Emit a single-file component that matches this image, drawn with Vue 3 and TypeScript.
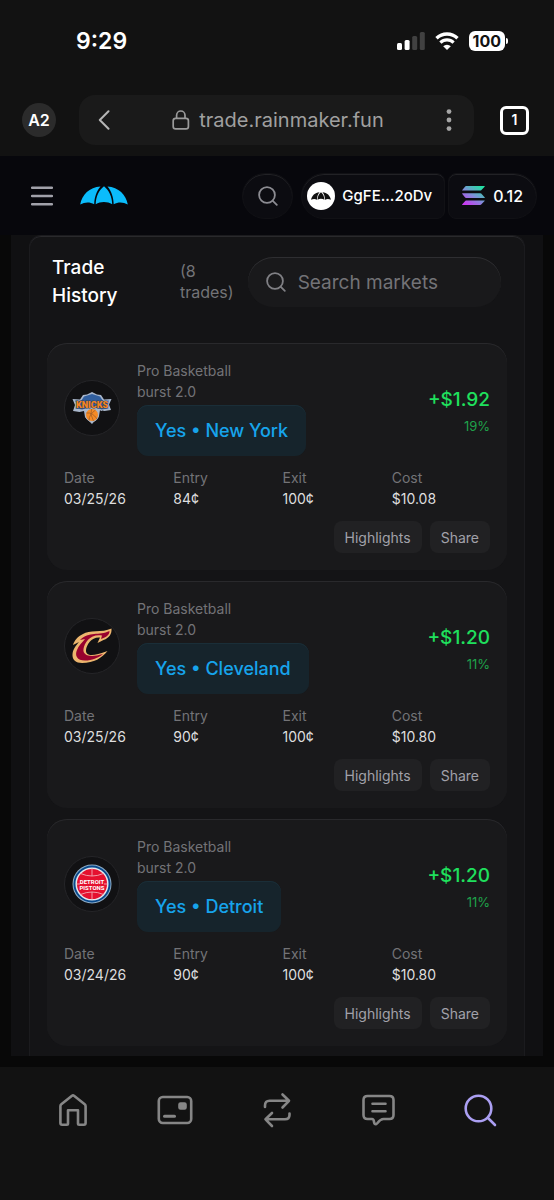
<script setup lang="ts">
import { ref } from 'vue'

interface Trade {
  id: number
  team: 'knicks' | 'cavs' | 'pistons'
  name: string
  date: string
  entry: string
  exit: string
  cost: string
  profit: string
  percent: string
}

const query = ref('')

const trades: Trade[] = [
  { id: 1, team: 'knicks', name: 'New York', date: '03/25/26', entry: '84¢', exit: '100¢', cost: '$10.08', profit: '+$1.92', percent: '19%' },
  { id: 2, team: 'cavs', name: 'Cleveland', date: '03/25/26', entry: '90¢', exit: '100¢', cost: '$10.80', profit: '+$1.20', percent: '11%' },
  { id: 3, team: 'pistons', name: 'Detroit', date: '03/24/26', entry: '90¢', exit: '100¢', cost: '$10.80', profit: '+$1.20', percent: '11%' },
]
</script>

<template>
  <div class="screen">
    <div class="status">
      <span class="clock">9:29</span>
      <div class="indicators">
        <svg width="28" height="18" viewBox="0 0 28 18" aria-hidden="true">
          <rect x="0" y="11" width="5" height="7" rx="1.5" fill="#fff" />
          <rect x="7.6" y="8" width="5" height="10" rx="1.5" fill="#fff" />
          <rect x="15.2" y="4" width="5" height="14" rx="1.5" fill="#414141" />
          <rect x="22.8" y="0" width="5" height="18" rx="1.5" fill="#414141" />
        </svg>
        <svg width="24" height="18" viewBox="0 0 24 18" aria-hidden="true">
          <path d="M1.5 6.2a15.2 15.2 0 0 1 21 0" fill="none" stroke="#fff" stroke-width="3.4" />
          <path d="M5.4 10.6a9.5 9.5 0 0 1 13.2 0" fill="none" stroke="#fff" stroke-width="3.2" />
          <path d="M8.2 14.2a5.4 5.4 0 0 1 7.6 0L12 18z" fill="#fff" />
        </svg>
        <div class="battery"><span class="level">100</span><span class="cap"></span></div>
      </div>
    </div>

    <div class="browser">
      <button class="profile" type="button">A2</button>
      <div class="address">
        <button class="plain" type="button" aria-label="Back">
          <svg width="12" height="20" viewBox="0 0 12 20" aria-hidden="true">
            <path d="M10.5 1.2 1.8 10l8.7 8.8" fill="none" stroke="#b5b5b5" stroke-width="2" stroke-linecap="round" stroke-linejoin="round" />
          </svg>
        </button>
        <button class="plain url" type="button">
          <svg width="18" height="20" viewBox="0 0 18 20" aria-hidden="true">
            <g fill="none" stroke="#9a9a9a" stroke-width="1.7">
              <rect x="1.2" y="8.4" width="15.2" height="10.4" rx="2.4" />
              <path d="M4.600 8.400V5.200a4.200 4.200 0 0 1 8.400 0v3.200" />
            </g>
          </svg>
          <span>trade.rainmaker.fun</span>
        </button>
        <button class="plain" type="button" aria-label="Menu">
          <svg width="6" height="22" viewBox="0 0 6 22" aria-hidden="true" fill="#a5a5a5">
            <circle cx="3" cy="2.6" r="2.4" /><circle cx="3" cy="11" r="2.4" /><circle cx="3" cy="19.6" r="2.4" />
          </svg>
        </button>
      </div>
      <button class="tabs" type="button" aria-label="Open tabs, 1">1</button>
    </div>

    <header class="site">
      <button class="plain" type="button" aria-label="Open menu">
        <svg width="22" height="20" viewBox="0 0 22 20" aria-hidden="true">
          <path d="M1 1.800h20M1 10h20M1 18.200h20" stroke="#a1a1aa" stroke-width="2.400" stroke-linecap="round" />
        </svg>
      </button>
      <a class="brand" href="#" aria-label="Rainmaker">
        <svg width="48" height="19" viewBox="0 0 48 19" aria-hidden="true" fill="#0bbcfb">
          <path d="M20.500.600C9.500 1.300 1.800 8.800.2 18.600c4.700-2.700 9.500-2.800 14-.3C14.500 11.300 16.500 5 20.500.6z" />
          <path d="M24 .3C18.600 4.500 16 10.500 15.700 18.200c4.900-2.900 11.500-2.900 16.500 0C31.900 10.500 29.200 4.500 24 .3z" />
          <path d="M27.500.600c4 4.400 5.900 10.700 6.200 17.700 4.500-2.500 9.500-2.400 14.100.3C46.200 8.800 38.500 1.300 27.500.6z" />
        </svg>
      </a>
      <button class="chip round" type="button" aria-label="Search">
        <svg width="20" height="20" viewBox="0 0 20 20" aria-hidden="true">
          <g fill="none" stroke="#8c8c92" stroke-width="1.800" stroke-linecap="round"><circle cx="9" cy="9" r="7.900" /><path d="m14.800 14.800 4 4" /></g>
        </svg>
      </button>
      <div class="account">
        <button class="chip wallet" type="button">
          <span class="avatar">
            <svg width="20" height="8" viewBox="0 0 48 19" aria-hidden="true" fill="#111">
              <path d="M20.500.600C9.500 1.300 1.800 8.800.2 18.600c4.700-2.700 9.500-2.800 14-.3C14.500 11.300 16.500 5 20.500.6z" />
              <path d="M24 .3C18.600 4.500 16 10.500 15.700 18.200c4.900-2.900 11.500-2.900 16.500 0C31.900 10.500 29.200 4.500 24 .3z" />
              <path d="M27.500.600c4 4.400 5.900 10.700 6.200 17.700 4.500-2.500 9.500-2.400 14.100.3C46.200 8.800 38.500 1.300 27.500.6z" />
            </svg>
          </span>
          <span>GgFE...2oDv</span>
        </button>
        <button class="chip balance" type="button">
          <svg width="23" height="19" viewBox="0 0 23 19" aria-hidden="true">
            <defs>
              <linearGradient id="solana" gradientUnits="userSpaceOnUse" x1="18" y1="0" x2="5" y2="19">
                <stop offset="0" stop-color="#24dfa4" /><stop offset="0.5" stop-color="#7d91d8" /><stop offset="1" stop-color="#c83af0" />
              </linearGradient>
            </defs>
            <g fill="url(#solana)">
              <path d="M4 0h18.200q1 0 .4.700L19.200 4.200q-.4.400-1 .4H.7q-1 0-.4-.7L3.200.5Q3.500 0 4 0z" />
              <path d="M.7 7.200h17.500q.6 0 1 .4l3.400 3.600q.6.700-.4.700H4q-.5 0-.9-.4L.3 8Q-.3 7.200.7 7.200z" />
              <path d="M4 14.400h18.200q1 0 .4.700l-3.400 3.500q-.4.400-1 .4H.7q-1 0-.4-.7l2.900-3.400q.3-.5.800-.5z" />
            </g>
          </svg>
          <span>0.12</span>
        </button>
      </div>
    </header>

    <main class="page">
      <section class="panel">
        <div class="panel-head">
          <h1>Trade History</h1>
          <span class="count">(8 trades)</span>
          <label class="search">
            <svg width="20" height="20" viewBox="0 0 20 20" aria-hidden="true">
              <g fill="none" stroke="#808085" stroke-width="1.800" stroke-linecap="round"><circle cx="9" cy="9" r="7.900" /><path d="m14.800 14.800 4 4" /></g>
            </svg>
            <input v-model="query" type="text" placeholder="Search markets" aria-label="Search markets" />
          </label>
        </div>

        <article v-for="trade in trades" :key="trade.id" class="card">
          <div class="top">
            <div class="logo">
              <svg v-if="trade.team === 'knicks'" width="40" height="34" viewBox="0 0 40 34" aria-hidden="true">
                <path d="M.5 8 8 8.500 11 4l4-.5 5-2.500 5 2.500 4 .5 3 4.500 7.500-.5-2.500 5.500 2 5.500-6.500 1-4.500-1-1 6L20 33l-7-7-1-6-4.500 1L1 20l2-6z" fill="#a9b7cc" />
                <path d="m3 9.500 6 .5 3-4.500L20 3l8 2.500L31 10l6-.5-2 4 1.500 4-7 1L20 16l-9.500 2.500-7-1 1.500-4z" fill="#315f9f" />
                <path d="M10 19.500q10-5 20 0" fill="none" stroke="#a9b7cc" stroke-width="1" />
                <circle cx="20" cy="24" r="6.500" fill="#f58a25" stroke="#a9b7cc" />
                <path d="M14.500 22q6-1 10.500 6M17 29.500q0-6 6.500-10.500M19.500 18q-2 5 2 12" fill="none" stroke="#a35f26" stroke-width=".8" />
                <text class="arch" x="20" y="16.500">KNICKS</text>
              </svg>
              <svg v-else-if="trade.team === 'cavs'" width="42" height="38" viewBox="0 0 42 38" aria-hidden="true">
                <path d="M40.500 1.500c.5 5-2 9.500-8 11.500l-6 3 2.500-5.500c-8-1-13.500 7-14 12.500-.3 6 6 7 21.500 1C31 31 23 36 11 36c-6 0-10-3-9.500-9C2 22 5 18.500 8 15l-6 3c1-4 5-9 10-11C18 2.500 31 6 40.500 1.500z" fill="#ecb56e" />
                <path d="M38.500 4c0 4-3 6-8.500 8l1-3.500C20 6.500 13.500 15 12.500 22c-1 6.500 6.500 9 19.500 5-5 4-11 6.500-18 6.500-8 0-10.500-5-8-10.500 1.500-4 5-7.500 8-11l-5 1c9-9 19-4 29.500-9z" fill="#98022e" />
              </svg>
              <svg v-else width="40" height="40" viewBox="0 0 40 40" aria-hidden="true">
                <circle cx="20" cy="20" r="19.500" fill="#8eabc4" />
                <circle cx="20" cy="20" r="18.500" fill="#08498b" />
                <circle cx="20" cy="20" r="15.800" fill="#e5112f" stroke="#e5e9ee" stroke-width="1.500" />
                <path d="M8.500 9.500q11.500 5 23 0M8.500 30.500q11.500-5 23 0M4.500 20h31M20 4v8M20 28v8" fill="none" stroke="#f2a9b4" stroke-width=".9" />
                <rect x="8" y="13.500" width="24" height="13" fill="#e5112f" />
                <text class="crest" x="20" y="19.500">DETROIT</text>
                <text class="crest" x="20" y="26">PISTONS</text>
              </svg>
            </div>
            <div class="market">
              <p class="event">Pro Basketball burst 2.0</p>
              <span class="pick">Yes • {{ trade.name }}</span>
            </div>
            <div class="result">
              <strong>{{ trade.profit }}</strong>
              <span>{{ trade.percent }}</span>
            </div>
          </div>
          <dl class="stats">
            <div><dt>Date</dt><dd>{{ trade.date }}</dd></div>
            <div><dt>Entry</dt><dd>{{ trade.entry }}</dd></div>
            <div><dt>Exit</dt><dd>{{ trade.exit }}</dd></div>
            <div><dt>Cost</dt><dd>{{ trade.cost }}</dd></div>
          </dl>
          <div class="actions">
            <button type="button">Highlights</button>
            <button type="button">Share</button>
          </div>
        </article>
      </section>
    </main>

    <nav class="dock" aria-label="Wallet">
      <button type="button" aria-label="Home">
        <svg width="36" height="36" viewBox="0 0 36 36" aria-hidden="true">
          <path d="M17 3.800q1-.8 2 0l10.700 8.500q.9.700.9 2V31q0 1.700-1.700 1.700h-4.700q-1.200 0-1.200-1.200V18.200H13v13.300q0 1.200-1.200 1.200H7.100q-1.700 0-1.700-1.700V14.300q0-1.300.9-2z" />
        </svg>
      </button>
      <button type="button" aria-label="Cards">
        <svg width="36" height="36" viewBox="0 0 36 36" aria-hidden="true">
          <rect x="1.800" y="5" width="32.400" height="26" rx="4" />
          <path d="M7.500 24.300h10" stroke-width="3" />
          <rect x="22.500" y="11.500" width="6" height="5" rx="1" fill="#868686" />
        </svg>
      </button>
      <button type="button" aria-label="Swap">
        <svg width="36" height="36" viewBox="0 0 36 36" aria-hidden="true">
          <path d="M6 15v-1.500Q6 8.800 10.500 8.800h19M23.500 2.500l6.500 6.300-6.500 6.700M30.500 21.500V23q0 4.300-4.500 4.300H6.500M13 21l-6.500 6.300L13 34" />
        </svg>
      </button>
      <button type="button" aria-label="Chat">
        <svg width="36" height="36" viewBox="0 0 36 36" aria-hidden="true">
          <path d="M6.500 4h22q4 0 4 4v15q0 4-4 4h-6c-3 0-4.500 2-6 4q-1.500 2-3 .5c-1-1.500 0-4.500-2.500-4.500H6.500q-4 0-4-4V8q0-4 4-4zM11.500 11.700h13M11.500 19.300h13" />
        </svg>
      </button>
      <button class="active" type="button" aria-label="Explore">
        <svg width="36" height="36" viewBox="0 0 36 36" aria-hidden="true">
          <circle cx="15.500" cy="16.500" r="12.800" /><path d="m25 26 7 7" />
        </svg>
      </button>
    </nav>
  </div>
</template>

<style>
body {
  margin: 0;
  background: #121212;
}
</style>

<style scoped>
.screen {
  display: flex;
  flex-direction: column;
  min-height: 100vh;
  background: #080808;
  color: #fff;
  font-family: Inter, "Liberation Sans", sans-serif;
}

.screen * {
  box-sizing: border-box;
}

button,
input {
  font: inherit;
  color: inherit;
}

button {
  border: 0;
  padding: 0;
  cursor: pointer;
}

svg {
  display: block;
  flex: none;
}

.plain {
  background: none;
}

.status {
  display: flex;
  align-items: center;
  justify-content: space-between;
  height: 84px;
  padding: 0 46px 2px 76px;
  background: #121212;
}

.clock {
  font-size: 23px;
  font-weight: 600;
}

.indicators {
  display: flex;
  align-items: center;
  gap: 10px;
}

.battery {
  display: flex;
  align-items: center;
  gap: 1px;
}

.level {
  padding: 0 4px;
  border-radius: 6px;
  background: #fff;
  color: #121212;
  font-size: 16px;
  font-weight: 700;
  line-height: 20px;
}

.cap {
  width: 2px;
  height: 6px;
  border-radius: 0 2px 2px 0;
  background: #fff;
}

.browser {
  display: flex;
  align-items: center;
  gap: 23px;
  height: 72px;
  padding: 0 25px 0 22px;
  background: #121212;
}

.profile {
  width: 34px;
  height: 34px;
  border-radius: 50%;
  background: #2b2b2b;
  font-size: 16px;
  font-weight: 600;
}

.address {
  display: flex;
  flex: 1;
  align-items: center;
  height: 50px;
  padding: 0 22px 0 19px;
  margin-right: 3px;
  border-radius: 16px;
  background: #1a1a1a;
}

.url {
  display: flex;
  flex: 1;
  align-items: center;
  justify-content: center;
  gap: 9px;
  color: #a0a0a0;
  font-size: 20px;
}

.tabs {
  width: 29px;
  height: 29px;
  border: 3px solid #fff;
  border-radius: 6px;
  background: none;
  font-size: 14px;
  font-weight: 600;
  line-height: 16px;
}

.site {
  display: flex;
  align-items: center;
  height: 79px;
  padding: 0 17px 0 31px;
  background: #07070c;
}

.brand {
  margin: 0 auto 0 27px;
}

.chip {
  display: flex;
  align-items: center;
  height: 46px;
  border: 1px solid #111115;
  background: #0c0c11;
  box-shadow: inset 0 1px 0 #222226;
  font-size: 16px;
  font-weight: 500;
}

.round {
  justify-content: center;
  width: 51px;
  border-radius: 23px;
}

.account {
  display: flex;
  gap: 3px;
  margin-left: 8px;
}

.wallet {
  gap: 7px;
  padding: 0 12px 0 5px;
  border-radius: 23px 8px 8px 23px;
  font-size: 15px;
}

.avatar {
  display: grid;
  place-items: center;
  width: 28px;
  height: 28px;
  border-radius: 50%;
  background: #fff;
}

.balance {
  gap: 8px;
  padding: 0 13px 0 13px;
  border-radius: 8px 23px 23px 8px;
}

.page {
  padding: 0 18px;
  margin: 0 11px 11px;
  background: #101012;
}

.panel {
  display: grid;
  gap: 11px;
  padding: 18px 17px 10px;
  border: 1px solid #1b1b1e;
  border-bottom: 0;
  border-radius: 12px 12px 0 0;
  background: #141416;
  box-shadow: inset 0 1px 0 #29292c;
}

.panel-head {
  display: grid;
  grid-template-columns: minmax(0, 9fr) min-content minmax(0, 20fr);
  align-items: center;
  gap: 14px;
  padding: 0 6px 0 5px;
  margin-bottom: 22px;
}

h1 {
  margin: 0;
  font-size: 19px;
  font-weight: 500;
  line-height: 28px;
}

.count {
  color: #737377;
  font-size: 16px;
  line-height: 21px;
}

.search {
  display: flex;
  align-items: center;
  gap: 12px;
  height: 50px;
  padding: 0 18px;
  border-radius: 25px;
  background: #19191b;
  box-shadow: inset 0 1px 0 #2e2e31;
}

.search input {
  flex: 1;
  min-width: 0;
  padding: 0;
  border: 0;
  outline: 0;
  background: none;
  font-size: 19px;
}

.search input::placeholder {
  color: #737377;
  opacity: 1;
}

.card {
  padding: 17px;
  border-radius: 20px;
  background: #19191b;
  box-shadow: inset 0 1px 0 #29292c;
}

.top {
  display: flex;
  align-items: center;
}

.logo {
  display: grid;
  flex: none;
  place-items: center;
  width: 56px;
  height: 56px;
  margin-right: 17px;
  border: 1px solid #252528;
  border-radius: 50%;
  background: #111113;
}

.crest {
  fill: #fff;
  font-family: Roboto, sans-serif;
  font-size: 6px;
  font-weight: 700;
  text-anchor: middle;
}

.arch {
  fill: #f5841f;
  stroke: #3c4252;
  stroke-width: 1px;
  paint-order: stroke;
  font-family: Roboto, sans-serif;
  font-size: 9px;
  font-weight: 900;
  text-anchor: middle;
}

.market {
  flex: 1;
}

.event {
  max-width: 120px;
  margin: 0 0 3px;
  color: #737377;
  font-size: 14px;
  line-height: 21px;
}

.pick {
  display: inline-block;
  padding: 12px 18px 11px;
  border-radius: 11px;
  background: #16242c;
  box-shadow: inset 0 1px 0 #1a2e38;
  color: #16a4ec;
  font-size: 18px;
  font-weight: 500;
  line-height: 28px;
  vertical-align: top;
}

.result {
  display: grid;
  gap: 3px;
  padding-top: 4px;
  text-align: right;
}

.result strong {
  color: #1fe05d;
  font-size: 19px;
  font-weight: 500;
  line-height: 28px;
}

.result span {
  color: #1fa24a;
  font-size: 13px;
  line-height: 18px;
}

.stats {
  display: grid;
  grid-template-columns: repeat(4, 1fr);
  gap: 11px;
  margin: 11px 0 12px;
  font-size: 14px;
  line-height: 21px;
}

.stats dt {
  color: #737377;
}

.stats dd {
  margin: 0;
  color: #dededf;
}

.actions {
  display: flex;
  justify-content: flex-end;
  gap: 8px;
}

.actions button {
  height: 32px;
  padding: 0 11px;
  border-radius: 8px;
  background: #212123;
  color: #a1a1aa;
  font-size: 14px;
}

.dock {
  display: grid;
  flex: 1;
  grid-template-columns: repeat(5, 1fr);
  align-items: start;
  padding: 25px 22px 24px;
  background: #121212;
}

.dock button {
  display: grid;
  place-items: center;
  background: none;
  color: #868686;
}

.dock .active {
  color: #ab9ff2;
}

.dock svg {
  fill: none;
  stroke: currentColor;
  stroke-width: 2.600px;
  stroke-linecap: round;
  stroke-linejoin: round;
}
</style>
